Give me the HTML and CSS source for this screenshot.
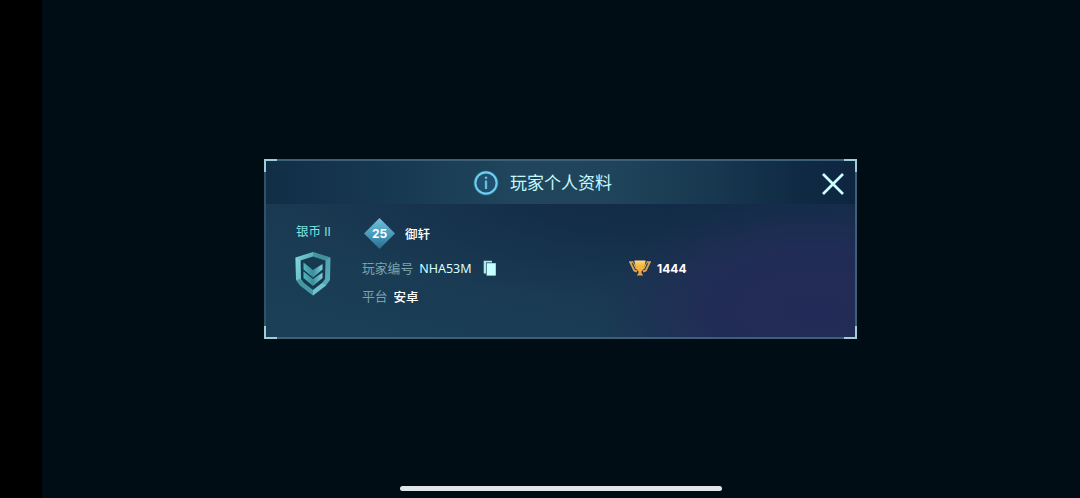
FILE: index.html
```html
<!DOCTYPE html>
<html lang="zh-CN">
<head>
  <meta charset="UTF-8" />
  <meta name="viewport" content="width=device-width, initial-scale=1.0"/>
  <title>玩家个人资料</title>
  <link rel="stylesheet" href="styles.css">
</head>
<body>
  <main class="screen">
    <section class="panel">
      <header class="panel-header">
        <svg class="info-icon" viewBox="0 0 26 26">
          <circle cx="13" cy="13" r="11.6" fill="none" stroke="#258bb4" stroke-opacity=".4" stroke-width="2"/>
          <circle cx="13" cy="13" r="10.6" fill="#205070" stroke="#70cdf0" stroke-width="2.1"/>
          <path d="M13 10.5v8.500" stroke="#66bddd" stroke-width="2.300"/>
          <circle cx="13" cy="7.8" r="1.3" fill="#66bddd"/>
        </svg>
        <h1>玩家个人资料</h1>
        <button class="close" aria-label="关闭">
          <svg viewBox="0 0 24 24"><path d="M2 2l20 20M22 2L2 22" stroke="#cbfcff" stroke-width="2.7"/></svg>
        </button>
      </header>

      <div class="panel-body">
        <div class="rank">
          <p>银币 <span>II</span></p>
          <svg class="shield" viewBox="0 0 36 44">
            <defs>
              <linearGradient id="rim" x1="0" y1="0" x2="1" y2="1">
                <stop offset="0" stop-color="#83d7dc"/>
                <stop offset=".4" stop-color="#4fa0ae"/>
                <stop offset="1" stop-color="#5cb0bd"/>
              </linearGradient>
              <linearGradient id="chevron" x1="0" y1="0" x2="1" y2="0">
                <stop offset="0" stop-color="#54b4bd"/>
                <stop offset=".5" stop-color="#3a8f9c"/>
                <stop offset="1" stop-color="#7fd0d8"/>
              </linearGradient>
            </defs>
            <path d="M18 0L35.5 5.5L35 28L31 33.5L18 43.5L5 33.5L1 28L.5 5.5Z" fill="url(#rim)"/>
            <path d="M18 4.5L30.500 8.500L30 27L27 31L18 38L9 31L6 27L5.500 8.500Z" fill="#153a50"/>
            <path d="M5.500 8.500L.5 5.500L1 28L6 27Z" fill="#87dfe1" opacity=".5"/>
            <path d="M18 0L35.5 5.500L30.500 8.500L18 4.500Z" fill="#2d7588" opacity=".4"/>
            <path d="M6 27L9 31L18 38V43.500L5 33.500L1 28Z" fill="#2f7e8c" opacity=".3"/>
            <path d="M27 31L18 38V43.500L31 33.500Z" fill="#8adce2" opacity=".5"/>
            <path d="M8.500 10.500L18 18L27.500 12V17.500L18 25.500L8.500 17.500Z" fill="url(#chevron)"/>
            <path d="M8.500 19.500L18 27L27.500 20.500V26L18 34L8.500 26Z" fill="url(#chevron)"/>
          </svg>
        </div>

        <div class="info">
          <div class="player">
            <div class="level"><span>25</span></div>
            <span class="name">御轩</span>
          </div>
          <div class="row">
            <div class="field player-id">
              <span class="label">玩家编号</span>
              <span class="code">NHA53M</span>
              <svg class="copy" viewBox="0 0 13 16">
                <path d="M.7 .7H9V2.500H3V13.500H.7Z" fill="#a7eceb"/>
                <path d="M3.600 3.200H12.800V15.600H3.600Z" fill="#c6ffff"/>
              </svg>
            </div>
            <div class="trophies">
              <svg class="trophy" viewBox="0 0 22 16">
                <defs>
                  <linearGradient id="gold" x1="0" y1="0" x2="0" y2="1">
                    <stop offset="0" stop-color="#ffd375"/>
                    <stop offset=".35" stop-color="#f8b638"/>
                    <stop offset="1" stop-color="#e2a04e"/>
                  </linearGradient>
                </defs>
                <path d="M4.500 2.200H1.200L3.500 6.800L5.200 10.500L8 11.500M17.500 2.200H20.800L18.500 6.800L16.800 10.500L14 11.500" fill="none" stroke="#d9a356" stroke-width="1.900"/>
                <path d="M4.500 3L6.800 8.700M17.500 3L15.200 8.700" stroke="#ddb777" stroke-width="1"/>
                <path d="M5.500 1H16.500L15.300 8.500L12.500 11.500V13L14.200 15.500H7.800L9.500 13V11.500L6.700 8.500Z" fill="url(#gold)"/>
                <path d="M5.500 1H16.500" stroke="#f8dfa0" stroke-width="1"/>
              </svg>
              <span>1444</span>
            </div>
          </div>
          <div class="field">
            <span class="label">平台</span>
            <span class="value">安卓</span>
          </div>
        </div>
      </div>

      <i class="corner top left"></i>
      <i class="corner top right"></i>
      <i class="corner bottom left"></i>
      <i class="corner bottom right"></i>
    </section>
    <div class="home-bar"></div>
  </main>
</body>
</html>
```
FILE: styles.css
```css
:root {
  --bg: #000d15;
  --ice: #c5faff;
  --label: #7ba3ae;
  --line: #3d6078;
}

* {
  box-sizing: border-box;
}

body {
  margin: 0;
  height: 100vh;
  padding-left: 42px;
  overflow: hidden;
  background: #000;
  color: white;
  font-family: "Noto Sans", "Noto Sans CJK SC", sans-serif;
}

h1, p {
  margin: 0;
}

.screen {
  position: relative;
  height: 100%;
  display: flex;
  align-items: center;
  justify-content: center;
  background: var(--bg);
}

.panel {
  position: relative;
  width: 593px;
  height: 180px;
  margin-right: 1px;
  border: 2px solid var(--line);
  border-left-color: #2f5169;
  background:
    radial-gradient(ellipse 215px 115px at 93% 85%, #222b57 0%, #212c56 50%, rgba(33, 44, 86, 0) 100%),
    radial-gradient(ellipse 340px 100px at 65% 22%, rgba(17, 41, 70, 0.9), rgba(17, 41, 70, 0)),
    linear-gradient(15deg, #1a4058 0%, #19374f 55%, #122b48 100%);
}

.panel-header {
  display: flex;
  align-items: center;
  height: 43px;
  padding: 0 9px 0 207px;
  background:
    linear-gradient(90deg, #122e47 0%, #163850 20%, #20465b 42%, #20455b 58%, #17384f 76%, #102a44 90%, #0e2540 100%);
}

.info-icon {
  width: 26px;
  height: 26px;
}

.panel-header h1 {
  margin: -2px 0 0 11px;
  color: var(--ice);
  font-family: "Noto Sans CJK SC", sans-serif;
  font-size: 17px;
  font-weight: 400;
  line-height: 24px;
}

.close {
  width: 26px;
  height: 26px;
  margin: 3px 0 0 auto;
  padding: 1px;
  border: none;
  background: none;
}

.close svg {
  display: block;
  width: 24px;
  height: 24px;
}

.panel-body {
  display: flex;
  padding: 14px 29px 0;
}

.rank {
  width: 36px;
  margin-right: 31px;
}

.rank p {
  padding: 1px 0 0 1px;
  color: #7de4e2;
  font-size: 12.5px;
  line-height: 26px;
  white-space: nowrap;
}

.rank p span {
  font-family: Roboto, sans-serif;
  font-size: 12px;
}

.shield {
  display: block;
  width: 36px;
  height: 44px;
  margin-top: 7px;
}

.info {
  flex: 1;
  font-size: 12.5px;
}

.player {
  display: flex;
  align-items: center;
  height: 31px;
  padding-left: 2px;
}

.level {
  display: flex;
  align-items: center;
  justify-content: center;
  width: 31px;
  height: 31px;
  background: linear-gradient(#72c1db, #4b9dbd 50%, #296f93);
  clip-path: polygon(50% 0, 100% 50%, 50% 100%, 0 50%);
  font-family: Inter, sans-serif;
  font-size: 12px;
  font-weight: 700;
}

.name {
  margin-left: 10px;
  font-weight: 500;
}

.row {
  display: flex;
  align-items: center;
  height: 28px;
  margin-top: 5px;
}

.field {
  display: flex;
  align-items: center;
  height: 28px;
}

.player-id {
  width: 267px;
}

.label {
  margin-top: -2px;
  color: var(--label);
  font-size: 12.8px;
}

.code {
  margin-left: 6px;
  color: #d8ffff;
}

.value {
  margin-left: 6px;
  font-weight: 500;
}

.copy {
  width: 13px;
  height: 16px;
  margin-left: 11px;
}

.trophies {
  display: flex;
  align-items: center;
  font-family: Inter, sans-serif;
  font-size: 12px;
  font-weight: 700;
}

.trophy {
  width: 22px;
  height: 16px;
  margin-right: 6px;
}

/* bright brackets over the frame */
.corner {
  position: absolute;
  width: 13px;
  height: 13px;
  border: 0 solid #9fced5;
}

.top { top: -2px; border-top-width: 2px; }
.bottom { bottom: -2px; border-bottom-width: 2px; }
.left { left: -2px; border-left-width: 2px; }
.right { right: -2px; border-right-width: 2px; }

.home-bar {
  position: absolute;
  bottom: 7px;
  left: 358px;
  width: 322px;
  height: 5px;
  border-radius: 3px;
  background: #e3e6e8;
}
```
